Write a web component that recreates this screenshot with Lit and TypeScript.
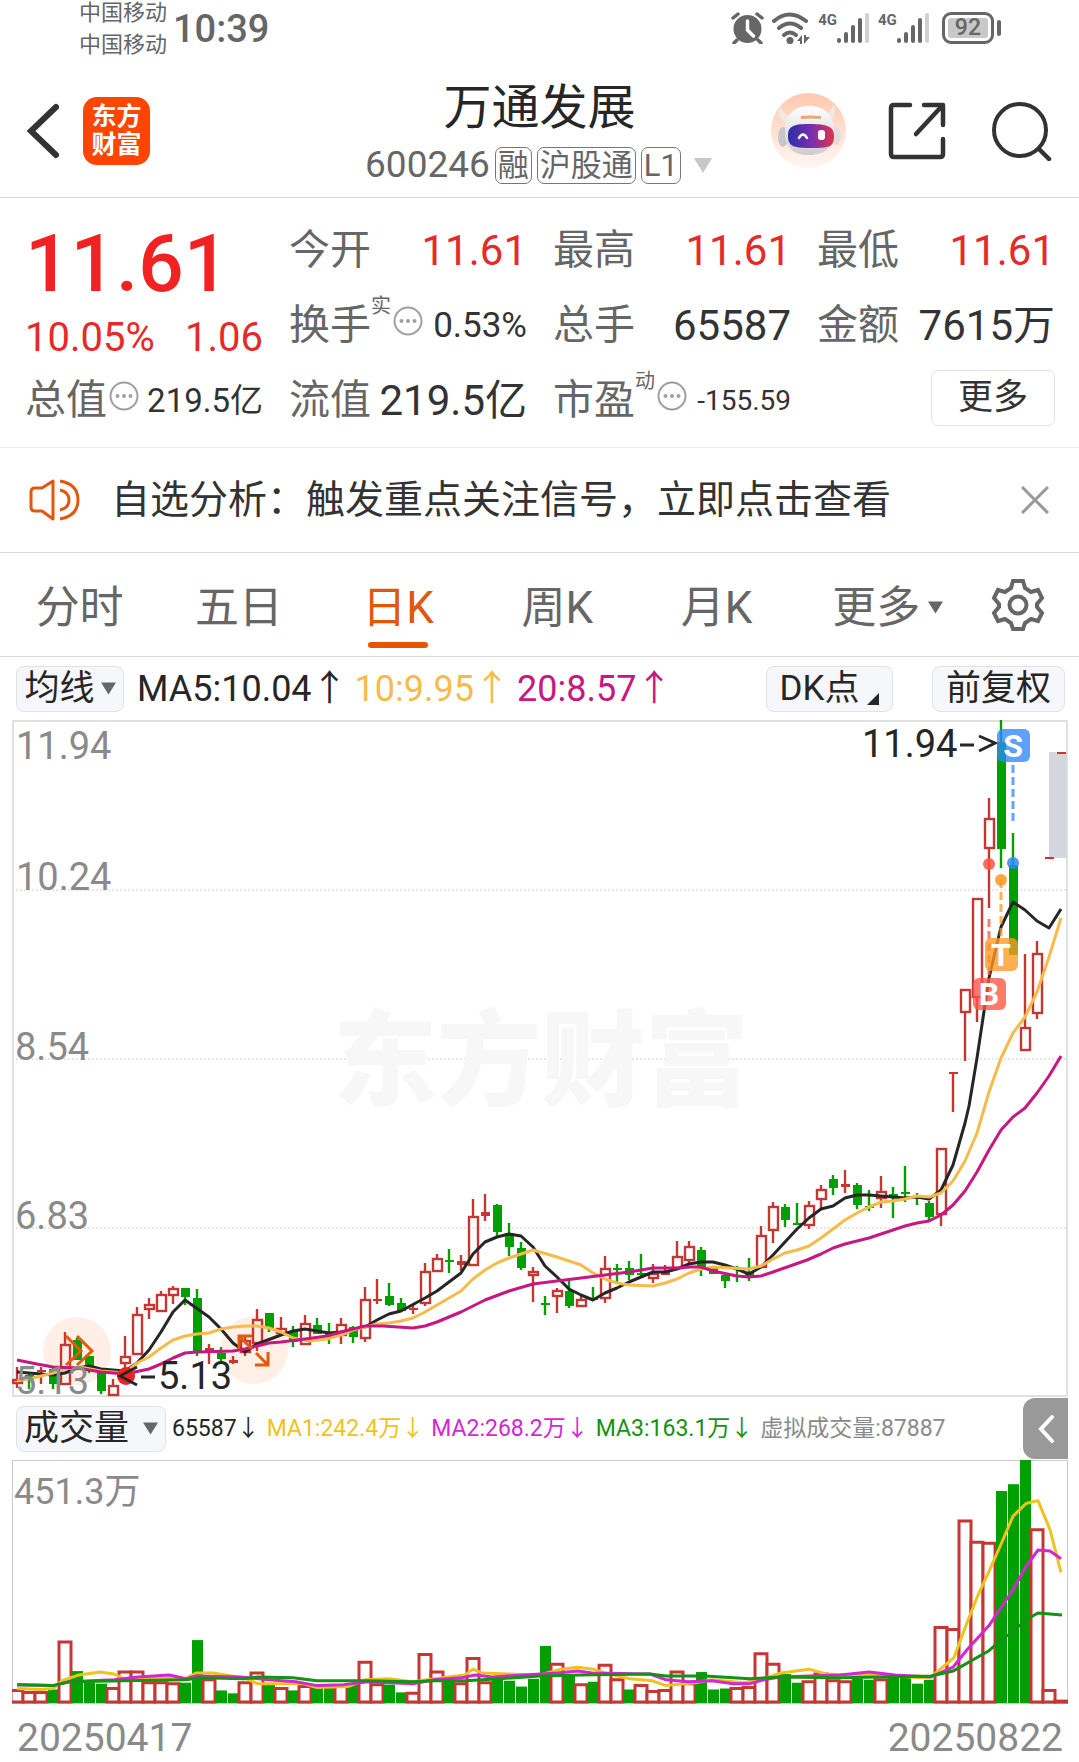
import { LitElement, html, svg, css } from "lit";
import { customElement, state } from "lit/decorators.js";

type Dir = "r" | "g";
/** direction, high, body top, body bottom, low, volume bar height */
type Candle = [Dir, number, number, number, number, number];

const CANDLES: Candle[] = [
  ["r", 1367, 1379, 1383, 1388, 14], ["g", 1372, 1375, 1378, 1389, 12], ["r", 1367, 1370, 1371, 1384, 12],
  ["g", 1367, 1369, 1384, 1389, 14], ["r", 1332, 1344, 1384, 1384, 64], ["g", 1338, 1340, 1360, 1360, 33],
  ["g", 1356, 1356, 1367, 1373, 21], ["g", 1373, 1373, 1391, 1394, 20], ["r", 1379, 1385, 1395, 1395, 16],
  ["r", 1336, 1356, 1363, 1370, 33], ["r", 1307, 1314, 1354, 1354, 33], ["r", 1298, 1304, 1309, 1319, 22],
  ["r", 1291, 1294, 1311, 1311, 22], ["r", 1286, 1288, 1295, 1304, 21], ["g", 1288, 1288, 1297, 1305, 21],
  ["g", 1289, 1298, 1353, 1356, 65], ["r", 1344, 1348, 1350, 1364, 25], ["g", 1347, 1353, 1359, 1361, 13],
  ["r", 1356, 1360, 1362, 1364, 10], ["r", 1337, 1340, 1352, 1356, 22], ["r", 1309, 1319, 1343, 1351, 32],
  ["g", 1313, 1313, 1328, 1332, 19], ["r", 1317, 1328, 1333, 1336, 16], ["g", 1326, 1331, 1342, 1347, 13],
  ["r", 1315, 1323, 1344, 1344, 18], ["g", 1318, 1325, 1334, 1334, 16], ["g", 1323, 1333, 1334, 1344, 16],
  ["r", 1318, 1324, 1335, 1344, 19], ["g", 1326, 1327, 1337, 1343, 19], ["r", 1287, 1299, 1338, 1342, 43],
  ["r", 1279, 1299, 1300, 1304, 20], ["g", 1283, 1296, 1305, 1306, 19], ["g", 1298, 1303, 1311, 1312, 11],
  ["r", 1305, 1308, 1309, 1314, 11], ["r", 1263, 1271, 1303, 1306, 51], ["r", 1254, 1258, 1271, 1271, 33],
  ["g", 1249, 1260, 1262, 1273, 22], ["r", 1255, 1261, 1264, 1271, 21], ["r", 1199, 1216, 1265, 1265, 47],
  ["r", 1194, 1212, 1215, 1221, 22], ["g", 1204, 1205, 1232, 1237, 25], ["g", 1223, 1233, 1247, 1256, 23],
  ["g", 1242, 1248, 1268, 1270, 17], ["r", 1267, 1271, 1275, 1302, 25], ["g", 1296, 1303, 1305, 1315, 59],
  ["r", 1288, 1290, 1296, 1313, 41], ["g", 1281, 1291, 1306, 1308, 29], ["r", 1295, 1299, 1306, 1306, 20],
  ["g", 1287, 1298, 1300, 1300, 22], ["r", 1256, 1268, 1298, 1303, 40], ["g", 1264, 1268, 1270, 1282, 25],
  ["g", 1261, 1268, 1275, 1280, 14], ["g", 1254, 1273, 1275, 1277, 19], ["r", 1264, 1273, 1278, 1283, 13],
  ["r", 1265, 1271, 1274, 1274, 14], ["r", 1241, 1256, 1268, 1268, 33], ["r", 1241, 1246, 1260, 1263, 21],
  ["g", 1247, 1250, 1267, 1276, 32], ["g", 1268, 1268, 1274, 1274, 14], ["g", 1273, 1275, 1281, 1288, 15],
  ["g", 1266, 1275, 1277, 1282, 16], ["g", 1258, 1273, 1276, 1281, 17], ["r", 1226, 1235, 1267, 1267, 52],
  ["r", 1202, 1206, 1230, 1243, 41], ["g", 1204, 1207, 1220, 1227, 30], ["g", 1203, 1223, 1225, 1225, 21],
  ["r", 1201, 1205, 1225, 1229, 23], ["r", 1185, 1189, 1199, 1208, 31], ["g", 1175, 1179, 1188, 1195, 24],
  ["r", 1170, 1184, 1186, 1193, 23], ["g", 1183, 1185, 1205, 1209, 25], ["g", 1190, 1206, 1207, 1211, 24],
  ["r", 1176, 1191, 1198, 1208, 25], ["g", 1187, 1194, 1196, 1218, 27], ["g", 1166, 1192, 1194, 1202, 29],
  ["g", 1193, 1196, 1198, 1205, 20], ["g", 1201, 1203, 1217, 1220, 24], ["r", 1148, 1148, 1214, 1226, 79],
  ["r", 1072, 1072, 1073, 1112, 77], ["r", 989, 989, 1012, 1061, 189], ["r", 898, 898, 997, 1022, 167],
  ["r", 798, 818, 848, 908, 166], ["g", 720, 742, 849, 868, 219], ["g", 833, 865, 955, 955, 226],
  ["r", 954, 1027, 1050, 1050, 251], ["r", 941, 953, 1013, 1019, 180], ["r", 857, 857, 858, 858, 14],
  ["r", 752, 752, 753, 753, 3],
];
/** Sessions whose volume bar takes the opposite colour to the candle. */
const VOLUME_FLIPPED = new Set([1, 18, 43, 50, 52, 60, 61, 68, 84]);

const PRICE_MA = [
  { cls: "ma-a", pts: "17,1372 53,1375 65,1373 77,1368 89,1366 101,1369 125,1371 137,1363 149,1350 161,1332 173,1312 185,1300 209,1317 221,1329 233,1343 245,1352 257,1344 281,1335 293,1331 305,1329 329,1333 341,1332 365,1327 377,1320 389,1314 401,1311 425,1298 437,1291 449,1282 461,1273 473,1254 485,1242 497,1237 509,1234 521,1236 533,1247 545,1266 557,1277 569,1289 581,1295 593,1300 605,1293 617,1288 629,1282 641,1277 653,1272 665,1272 677,1269 689,1264 701,1262 713,1262 725,1265 737,1269 749,1274 761,1267 773,1255 785,1242 797,1229 809,1218 821,1209 833,1206 845,1198 857,1195 869,1195 893,1197 905,1198 917,1197 929,1199 941,1190 953,1165 965,1123 969,1106 977,1058 989,978 1001,927 1013,902 1025,910 1037,921 1049,928 1061,909" },
  { cls: "ma-b", pts: "17,1381 33,1378 53,1373 65,1369 80,1367 101,1371 125,1373 137,1363 149,1357 161,1348 173,1340 185,1336 197,1334 209,1333 221,1329 233,1327 245,1326 257,1326 269,1328 281,1332 293,1338 310,1341 327,1339 341,1335 353,1330 365,1327 377,1324 389,1323 401,1321 413,1318 425,1312 437,1305 449,1298 461,1291 473,1279 485,1270 497,1263 509,1258 521,1254 533,1250 557,1257 569,1261 581,1265 593,1273 605,1279 617,1283 629,1285 653,1286 665,1283 677,1279 689,1273 701,1269 713,1267 749,1269 761,1266 773,1259 785,1253 797,1250 809,1246 821,1238 833,1229 845,1220 857,1213 869,1207 881,1202 893,1201 905,1199 917,1196 929,1197 941,1193 953,1181 965,1161 977,1133 989,1092 1001,1058 1013,1033 1025,1017 1037,992 1049,957 1061,918" },
  { cls: "ma-c", pts: "17,1360 37,1364 53,1367 77,1368 101,1372 125,1374 149,1369 161,1364 173,1358 185,1353 197,1352 233,1351 245,1349 257,1346 269,1343 281,1342 305,1339 327,1336 341,1332 365,1326 383,1326 413,1328 425,1326 437,1322 449,1317 461,1312 485,1300 509,1291 533,1284 557,1281 581,1278 605,1275 629,1272 653,1268 677,1268 690,1267 701,1267 713,1271 737,1276 749,1277 761,1276 773,1272 790,1266 807,1260 821,1254 833,1248 845,1244 869,1238 893,1230 905,1226 917,1223 929,1221 941,1215 953,1205 965,1191 977,1172 989,1150 1001,1130 1013,1117 1025,1108 1037,1093 1049,1076 1061,1056" },
];

const VOLUME_MA = [
  { cls: "vol-a", pts: "17,1699 41,1700 53,1699 62,1691 79,1685 100,1682 114,1684 124,1689 162,1688 183,1690 196,1683 213,1683 244,1688 258,1694 303,1694 317,1698 348,1697 365,1690 389,1689 413,1692 448,1687 465,1685 473,1679 482,1683 540,1685 561,1679 578,1677 593,1679 605,1683 630,1689 652,1691 666,1696 695,1693 712,1690 743,1693 760,1690 781,1683 809,1679 826,1684 850,1685 884,1685 919,1688 931,1687 954,1667 967,1631 977,1605 989,1578 1001,1550 1013,1521 1026,1508 1038,1505 1050,1535 1061,1579" },
  { cls: "vol-b", pts: "17,1695 53,1696 69,1692 114,1690 138,1687 169,1685 186,1689 196,1686 241,1687 269,1690 296,1692 317,1696 344,1695 368,1692 413,1694 434,1690 461,1688 475,1685 492,1687 540,1684 557,1683 578,1681 592,1683 650,1684 666,1690 688,1692 712,1691 733,1694 750,1694 764,1690 781,1687 809,1686 840,1685 869,1682 895,1685 931,1687 953,1677 967,1659 989,1634 1013,1597 1026,1573 1038,1556 1050,1557 1061,1565" },
  { cls: "vol-c", pts: "17,1695 53,1696 69,1692 124,1691 186,1690 200,1688 244,1689 258,1687 293,1688 317,1691 368,1691 413,1692 434,1691 465,1691 500,1689 540,1686 580,1685 650,1684 666,1686 705,1686 750,1689 781,1687 840,1688 880,1687 931,1686 953,1681 989,1660 1001,1649 1013,1640 1026,1628 1038,1621 1050,1622 1062,1623" },
];

const PITCH = 12;
const centre = (i: number) => 17 + PITCH * i;

@customElement("kline-chart")
export class KlineChart extends LitElement {
  static styles = css`
    :host { display: block; }
    svg { display: block; width: 100%; height: auto; font-family: Roboto, "Noto Sans CJK SC", sans-serif; }
    .frame { fill: none; stroke: #e0e0e0; stroke-width: 2; }
    .grid { stroke: #cfcfcf; stroke-width: 1; stroke-dasharray: 2 2; }
    .up { fill: none; stroke: #c43733; stroke-width: 2.4; }
    .flat { fill: #c43733; }
    .down { fill: #00a000; }
    .down-wick { stroke: #00a000; stroke-width: 2.4; }
    .line { fill: none; stroke-width: 3; stroke-linejoin: round; }
    .ma-a { stroke: #262626; }
    .ma-b { stroke: #f6bb4b; }
    .ma-c { stroke: #c71780; }
    .axis { font-size: 38px; fill: #8a8a8a; }
    .note { font-size: 38px; fill: #262626; }
    .arrow { fill: none; stroke: #262626; stroke-width: 3; }
    .mark { font-size: 104px; font-weight: 900; fill: #f7f7f7; text-anchor: middle; }
    .badge { font-size: 32px; font-weight: 700; fill: #fff; text-anchor: middle; }
    .halo { fill: #ffe4d6; opacity: .6; }
    .low { fill: #ee2222; }
    .tool { fill: none; stroke: #e35a0c; stroke-width: 3; }
    .range { fill: #d3d6dd; }
    .s { fill: #2f86fb; stroke: #2f86fb; }
    .t { fill: #ff9a22; stroke: #ff9a22; }
    .b { fill: #fe5442; stroke: #fe5442; }
    .dot { stroke: none; opacity: .85; }
    .box { stroke: none; opacity: .78; }
    .dash { stroke-width: 3; stroke-dasharray: 8 4; opacity: .75; }
  `;

  private candle([dir, high, top, bottom, low]: Candle, i: number) {
    const x = centre(i);
    if (dir === "g") {
      return svg`<line class="down-wick" x1=${x} x2=${x} y1=${high} y2=${low}></line>
        <rect class="down" x=${x - 4} y=${top} width="9" height=${Math.max(2, bottom - top)}></rect>`;
    }
    if (bottom - top < 4) {
      return svg`<line class="up" x1=${x} x2=${x} y1=${high} y2=${low}></line>
        <rect class="flat" x=${x - 4} y=${top} width="9" height=${bottom - top + 1}></rect>`;
    }
    return svg`<line class="up" x1=${x} x2=${x} y1=${high} y2=${top}></line>
      <line class="up" x1=${x} x2=${x} y1=${bottom} y2=${low}></line>
      <rect class="up" x=${x - 4} y=${top + 1} width="9" height=${bottom - top - 1}></rect>`;
  }

  render() {
    return html`<svg viewBox="12 720 1056 677" role="img" aria-label="日K线图">
      ${[890, 1059, 1228].map((y) => svg`<line class="grid" x1="12" x2="1068" y1=${y} y2=${y}></line>`)}
      <text class="mark" x="541" y="1098">东方财富</text>
      <rect class="frame" x="13" y="721" width="1054" height="675"></rect>
      <circle class="halo" cx="77" cy="1351" r="34"></circle>
      <circle class="halo" cx="254" cy="1350" r="34"></circle>
      <rect class="range" x="1049" y="752" width="18" height="106"></rect>
      ${CANDLES.map((c, i) => this.candle(c, i))}
      ${PRICE_MA.map((m) => svg`<polyline class="line ${m.cls}" points=${m.pts}></polyline>`)}
      <circle class="low" cx="126" cy="1376" r="9"></circle>
      <path class="tool" d="M66 1336l15 15-15 14M77 1336l15 15-15 14"></path>
      <path class="tool" d="M239 1349v-13h13M240 1337l12 12M256 1353l12 12M255 1365h13v-13"></path>
      <text class="axis" x="16" y="759">11.94</text>
      <text class="axis" x="16" y="890">10.24</text>
      <text class="axis" x="15" y="1060">8.54</text>
      <text class="axis" x="15" y="1229">6.83</text>
      <text class="axis" x="15" y="1394">5.13</text>
      <path class="arrow" d="M155 1377h-14M137 1367l-17 9 17 9"></path>
      <text class="note" x="158" y="1389">5.13</text>
      <text class="note" x="862" y="757">11.94</text>
      <path class="arrow" d="M960 745h14M979 736l16 7-16 8"></path>
      <line class="dash s" x1="1013" x2="1013" y1="765" y2="821"></line>
      <circle class="dot s" cx="1013" cy="863" r="6"></circle>
      <line class="dash t" x1="1001" x2="1001" y1="880" y2="938"></line>
      <circle class="dot t" cx="1001" cy="880" r="6"></circle>
      <line class="dash b" x1="989" x2="989" y1="919" y2="978"></line>
      <circle class="dot b" cx="989" cy="864" r="6"></circle>
      <rect class="box s" x="997" y="729" width="33" height="33" rx="6"></rect>
      <text class="badge" x="1013" y="757">S</text>
      <rect class="box t" x="985" y="938" width="33" height="33" rx="6"></rect>
      <text class="badge" x="1001" y="966">T</text>
      <rect class="box b" x="973" y="978" width="33" height="32" rx="6"></rect>
      <text class="badge" x="989" y="1005">B</text>
    </svg>`;
  }
}

@customElement("volume-chart")
export class VolumeChart extends LitElement {
  static styles = css`
    :host { display: block; position: relative; font-family: Roboto, "Noto Sans CJK SC", sans-serif; }
    svg { display: block; width: 100%; aspect-ratio: 1056 / 244; }
    .frame { fill: none; stroke: #cccccc; stroke-width: 2; vector-effect: non-scaling-stroke; }
    .up { fill: #fff; stroke: #c43733; stroke-width: 3; vector-effect: non-scaling-stroke; }
    .down { fill: #00a000; }
    .line { fill: none; stroke-width: 3; stroke-linejoin: round; vector-effect: non-scaling-stroke; }
    .vol-a { stroke: #efc21d; }
    .vol-b { stroke: #d227d2; }
    .vol-c { stroke: #139213; }
    .max { position: absolute; left: 2px; top: 9px; font-size: 36px; line-height: 46px; color: #8a8a8a; }
  `;

  render() {
    const base = 1714;
    return html`<svg viewBox="12 1463 1056 252" preserveAspectRatio="none" role="img" aria-label="成交量图">
        <rect class="frame" x="12" y="1463" width="1056" height="252"></rect>
        ${CANDLES.map(([dir, , , , , h], i) => {
          const x = centre(i);
          return (dir === "g") !== VOLUME_FLIPPED.has(i)
            ? svg`<rect class="down" x=${x - 5} y=${base - h} width="11" height=${h}></rect>`
            : svg`<rect class="up" x=${x - 6} y=${base - h + 1} width="12" height=${Math.max(1, h - 2)}></rect>`;
        })}
        ${VOLUME_MA.map((m) => svg`<polyline class="line ${m.cls}" points=${m.pts}></polyline>`)}
      </svg>
      <span class="max">451.3万</span>`;
  }
}

const info = html`<svg class="info" viewBox="0 0 30 30" aria-hidden="true">
  <circle cx="15" cy="15" r="13.5" fill="none" stroke="#a0a0a0" stroke-width="2"></circle>
  <g fill="#a0a0a0"><circle cx="8.5" cy="15" r="2"></circle><circle cx="15" cy="15" r="2"></circle><circle cx="21.5" cy="15" r="2"></circle></g>
</svg>`;

const caret = (cls = "") => html`<svg class="caret ${cls}" viewBox="0 0 16 13" aria-hidden="true"><path d="M0 0h16L8 13z" fill="currentColor"></path></svg>`;

const signal = html`<span class="net"><span class="gen">4G</span><svg class="bars" viewBox="0 0 34 32" aria-hidden="true">
  <g stroke="#666" stroke-width="4" stroke-linecap="round"><path d="M3 28v1M10 22v7M17 15v14M24 8v21"></path><path d="M31 3v26" stroke="#d0d0d0"></path></g>
</svg></span>`;

@customElement("app-root")
export class AppRoot extends LitElement {
  static styles = css`
    :host { display: block; background: #fff; color: #333; font-family: Roboto, "Noto Sans CJK SC", sans-serif; font-size: 36px; }
    * { box-sizing: border-box; }
    button { font: inherit; color: inherit; background: none; border: 0; padding: 0; margin: 0; cursor: pointer; }
    svg { display: block; flex: none; }
    h1, p { margin: 0; font-weight: 400; }

    .status { display: flex; align-items: center; padding: 0 78px 0 79px; min-height: 56px; color: #666; }
    .carriers { font-size: 22px; line-height: 32px; margin: -3px 0 -5px; }
    .carriers span { display: block; }
    .time { font-size: 38px; line-height: 54px; font-weight: 500; margin-left: 6px; padding-top: 2px; flex: 1; }
    .sys { display: flex; align-items: center; gap: 8px; }
    .alarm { width: 33px; height: 32px; }
    .wifi { width: 38px; height: 34px; }
    .net { display: flex; }
    .gen { font-size: 15px; line-height: 16px; font-weight: 700; }
    .bars { width: 34px; height: 32px; margin-left: -1px; }
    .battery { display: flex; align-items: center; gap: 3px; margin-left: 4px; }
    .cell { border: 3px solid #666; border-radius: 9px; padding: 3px; }
    .level { display: block; background: #c8c8c8; border-radius: 3px; font-size: 23px; line-height: 20px; font-weight: 500; padding: 0 7px; }
    .nub { width: 4px; height: 16px; border-radius: 2px; background: #666; }

    .head { display: grid; grid-template-columns: 1fr auto 1fr; align-items: center; min-height: 142px; padding: 0 26px; border-bottom: 1px solid #d8d8d8; }
    .left, .right { display: flex; align-items: center; padding-top: 8px; }
    .left { gap: 24px; }
    .right { justify-content: flex-end; gap: 42px; }
    .back { width: 33px; height: 56px; }
    .logo { display: grid; place-content: center; width: 67px; height: 68px; border-radius: 14px; background: #fe4502; color: #fff; font-size: 25px; line-height: 28px; font-weight: 700; text-decoration: none; text-align: center; }
    .logo span { display: block; }
    .title { text-align: center; align-self: start; padding-top: 20px; }
    h1 { font-size: 48px; line-height: 64px; color: #262626; }
    .sub { display: flex; align-items: center; gap: 5px; color: #666; font-size: 37px; line-height: 44px; margin-top: 3px; }
    .tag { border: 1px solid #777; border-radius: 7px; font-size: 31px; line-height: 35px; padding: 0 2px; }
    .caret { width: 15px; height: 13px; color: #666; }
    .caret.big { width: 22px; height: 15px; color: #c8c8c8; margin-left: 6px; }
    .robot { width: 75px; height: 75px; }
    .share { width: 60px; height: 60px; }
    .search { width: 61px; height: 60px; margin-left: 2px; }

    .quote { display: grid; grid-template-columns: repeat(4, minmax(0, 1fr)); column-gap: 26px; grid-template-rows: repeat(3, 75px); padding: 15px 24px 9px 25px; border-bottom: 1px solid #ececec; }
    .price { grid-row: span 2; color: #e62a2a; }
    .last { font-size: 80px; line-height: 78px; font-weight: 500; color: #f22222; padding: 12px 0 0 0; }
    .chg { display: flex; justify-content: space-between; font-size: 40px; line-height: 70px; }
    .cell-q { display: flex; align-items: center; white-space: nowrap; line-height: 75px; }
    .label { font-size: 41px; color: #666; }
    .sup { font-size: 20px; line-height: 20px; color: #666; align-self: flex-start; padding-top: 8px; }
    .info { width: 30px; height: 30px; margin-top: -10px; margin-left: 2px; }
    .val { margin-left: auto; font-size: 42px; }
    .val.red { color: #e62a2a; }
    .val.mid { font-size: 35px; }
    .val.small { font-size: 33px; }
    .val.tiny { font-size: 28px; }
    .more { justify-self: end; align-self: center; width: 124px; line-height: 54px; font-size: 35px; border: 1px solid #e2e2e2; border-radius: 7px; margin-bottom: 6px; }

    .notice { display: flex; align-items: center; min-height: 105px; padding: 0 30px 0 29px; border-bottom: 1px solid #d8d8d8; }
    .horn { width: 52px; height: 44px; }
    .notice p { flex: 1; margin-left: 30px; font-size: 39px; line-height: 56px; white-space: nowrap; }
    .close { width: 28px; height: 28px; }

    .tabs { display: grid; grid-template-columns: repeat(5, 16fr) 18fr 10fr; min-height: 104px; padding-right: 4px; border-bottom: 1px solid #d8d8d8; color: #666; }
    .tab { display: flex; align-items: center; justify-content: center; gap: 8px; font-size: 44px; line-height: 60px; padding-top: 6px; position: relative; white-space: nowrap; }
    .tab.menu { padding-left: 4px; }
    .tab.on { color: #e2570d; }
    .tab.on::after { content: ""; position: absolute; bottom: 8px; width: 60px; height: 6px; border-radius: 3px; background: #e65408; }
    .gear { width: 54px; height: 54px; }
    .tab.set { padding: 0 14px 0 0; }

    .bar { display: flex; align-items: center; min-height: 63px; padding: 0 14px 0 16px; white-space: nowrap; color: #262626; }
    .pill { display: flex; flex: none; align-items: center; justify-content: center; gap: 6px; height: 46px; border: 1px solid #dfe2e6; border-radius: 8px; background: #f6f7fa; font-size: 35px; line-height: 46px; }
    .avg { width: 108px; }
    .legend { display: flex; flex: 1; margin-left: 13px; gap: 7px; font-size: 36px; line-height: 48px; }
    .y { color: #f6bb4b; }
    .m { color: #c71780; }
    .dk { width: 127px; gap: 8px; }
    .corner { width: 12px; height: 12px; margin-top: 20px; }
    .adj { width: 133px; margin-left: 39px; }
    .vbar { padding-right: 11px; }
    .kind { width: 150px; gap: 14px; }
    .vlegend { display: flex; flex: 1; margin-left: 6px; gap: 7px; font-size: 23px; line-height: 48px; }
    .vy { color: #efc21d; }
    .vm { color: #d227d2; }
    .vg { color: #139213; }
    .vx { color: #8a8a8a; }
    .fold { display: grid; flex: none; place-items: center; width: 45px; height: 61px; border-radius: 12px 0 0 12px; background: #999; }
    .fold svg { width: 18px; height: 32px; }
    .plot { display: block; margin: 0 11px 0 12px; }
    .dates { display: flex; justify-content: space-between; padding: 11px 16px 1px 17px; font-size: 39px; line-height: 46px; color: #8a8a8a; }
  `;

  @state() private tab = "日K";

  private renderStatus() {
    return html`<div class="status">
      <div class="carriers"><span>中国移动</span><span>中国移动</span></div>
      <div class="time">10:39</div>
      <div class="sys">
        <svg class="alarm" viewBox="0 0 33 32" aria-hidden="true">
          <circle cx="16.5" cy="17" r="14" fill="#666"></circle>
          <path d="M2 6l5-4M26 2l5 4M6 28l-3 3M27 28l3 3" stroke="#666" stroke-width="3.5" stroke-linecap="round"></path>
          <path d="M16.5 9v9l6 6" fill="none" stroke="#fff" stroke-width="3.5" stroke-linecap="round"></path>
        </svg>
        <svg class="wifi" viewBox="0 0 38 34" aria-hidden="true">
          <g fill="none" stroke="#666" stroke-width="4" stroke-linecap="round"><path d="M2 10q15.5-13 32 0M7 17q11-9 22 0M12 24q6-5 12 0"></path></g>
          <circle cx="18" cy="29.5" r="3.5" fill="#666"></circle>
          <path d="M25 30l5-6v9h-2v-3zM32 24v9l6-7h-4v-2z" fill="#666"></path>
        </svg>
        ${signal}${signal}
        <div class="battery"><span class="cell"><span class="level">92</span></span><span class="nub"></span></div>
      </div>
    </div>`;
  }

  private renderHeader() {
    return html`<header class="head">
      <div class="left">
        <button aria-label="返回"><svg class="back" viewBox="0 0 33 56"><path d="M30 4L5 28l25 24" fill="none" stroke="#333" stroke-width="6" stroke-linecap="round"></path></svg></button>
        <a class="logo" href="#"><span>东方</span><span>财富</span></a>
      </div>
      <div class="title">
        <h1>万通发展</h1>
        <div class="sub"><span>600246</span><span class="tag">融</span><span class="tag">沪股通</span><span class="tag">L1</span>${caret("big")}</div>
      </div>
      <div class="right">
        <button aria-label="智能助手"><svg class="robot" viewBox="0 0 75 75">
          <defs>
            <linearGradient id="sky" x1="0" y1="0" x2="0" y2="1"><stop offset="0" stop-color="#ffc9ae"></stop><stop offset="1" stop-color="#fff7f3"></stop></linearGradient>
            <linearGradient id="visor"><stop offset="0" stop-color="#2b2fa8"></stop><stop offset=".5" stop-color="#7a2fae"></stop><stop offset="1" stop-color="#e0334d"></stop></linearGradient>
            <linearGradient id="shell" x1="0" y1="0" x2="0" y2="1"><stop offset="0" stop-color="#fff"></stop><stop offset="1" stop-color="#cfcbcf"></stop></linearGradient>
          </defs>
          <circle cx="37.5" cy="37.5" r="37.5" fill="url(#sky)"></circle>
          <path d="M9 14c-3 7 0 14 7 16l6-7c-6 0-10-3-13-9zM62 12c4 7 1 15-5 17l-5-8c5 0 8-3 10-9z" fill="#f0e9e8"></path>
          <ellipse cx="12" cy="44" rx="5" ry="10" fill="#c9c5c9"></ellipse><ellipse cx="65" cy="43" rx="5" ry="9" fill="#e3dcdc"></ellipse>
          <path d="M14 40c0-18 8-27 24-27s25 9 25 26c0 14-8 23-26 23-15 0-23-8-23-22z" fill="url(#shell)"></path>
          <path d="M30 23q10-1 20 0v3q-10-1-20 0z" fill="#e8a873"></path>
          <path d="M17 43c0-9 4-12 20-12s26 1 26 12-5 12-22 12c-17 0-24-1-24-12z" fill="url(#visor)"></path>
          <path d="M28 45q4-7 8 0" fill="none" stroke="#fff" stroke-width="2.5" stroke-linecap="round"></path>
          <rect x="47" y="37" width="7" height="10" rx="3" fill="#fff"></rect>
        </svg></button>
        <button aria-label="分享"><svg class="share" viewBox="0 0 60 60"><path d="M22 4H6q-3 0-3 3v46q0 3 3 3h46q3 0 3-3V38M36 4h19v20M54 5L28 33" fill="none" stroke="#333" stroke-width="4.5" stroke-linecap="round" stroke-linejoin="round"></path></svg></button>
        <button aria-label="搜索"><svg class="search" viewBox="0 0 61 60"><circle cx="28" cy="29" r="26" fill="none" stroke="#333" stroke-width="4"></circle><path d="M47 48l10 10" stroke="#333" stroke-width="4.5" stroke-linecap="round"></path></svg></button>
      </div>
    </header>`;
  }

  private cell(label: string, value: string, cls = "", sup = "", hint = false) {
    return html`<div class="cell-q"><span class="label">${label}</span>${sup ? html`<span class="sup">${sup}</span>` : ""}${hint ? info : ""}<span class="val ${cls}">${value}</span></div>`;
  }

  private renderQuote() {
    return html`<section class="quote">
      <div class="price">
        <div class="last">11.61</div>
        <div class="chg"><span>10.05%</span><span>1.06</span></div>
      </div>
      ${this.cell("今开", "11.61", "red")}
      ${this.cell("最高", "11.61", "red")}
      ${this.cell("最低", "11.61", "red")}
      ${this.cell("换手", "0.53%", "mid", "实", true)}
      ${this.cell("总手", "65587")}
      ${this.cell("金额", "7615万")}
      ${this.cell("总值", "219.5亿", "small", "", true)}
      ${this.cell("流值", "219.5亿")}
      ${this.cell("市盈", "-155.59", "tiny", "动", true)}
      <button class="more">更多</button>
    </section>`;
  }

  private renderNotice() {
    return html`<section class="notice">
      <svg class="horn" viewBox="0 0 52 44" aria-hidden="true"><g fill="none" stroke="#e2570d" stroke-width="3"><path d="M24 3v38L13 33H6q-4 0-4-4V14q0-4 4-4h7z" stroke-linejoin="round"></path><path d="M31 12q9 2 9 10t-9 10M31 3q18 3 18 19T31 41"></path></g></svg>
      <p>自选分析：触发重点关注信号，立即点击查看</p>
      <button aria-label="关闭"><svg class="close" viewBox="0 0 28 28"><path d="M1 1l26 26M27 1L1 27" stroke="#999" stroke-width="3"></path></svg></button>
    </section>`;
  }

  private renderTabs() {
    return html`<nav class="tabs">
      ${["分时", "五日", "日K", "周K", "月K"].map(
        (t) => html`<button class="tab ${t === this.tab ? "on" : ""}" @click=${() => (this.tab = t)}>${t}</button>`,
      )}
      <button class="tab menu">更多${caret()}</button>
      <button class="tab set" aria-label="设置"><svg class="gear" viewBox="0 0 54 54"><g fill="none" stroke="#666" stroke-width="4"><path d="M22 3h10l2 7 6 4 7-2 4 8-5 6v3l5 6-4 8-7-2-6 4-2 6H22l-2-6-6-4-7 2-4-8 5-6v-3l-5-6 4-8 7 2 6-4z"></path><circle cx="27" cy="27" r="8.5"></circle></g></svg></button>
    </nav>`;
  }

  render() {
    return html`
      ${this.renderStatus()} ${this.renderHeader()} ${this.renderQuote()} ${this.renderNotice()} ${this.renderTabs()}
      <div class="bar">
        <button class="pill avg">均线${caret()}</button>
        <div class="legend"><span>MA5:10.04↑</span><span class="y">10:9.95↑</span><span class="m">20:8.57↑</span></div>
        <button class="pill dk">DK点<svg class="corner" viewBox="0 0 12 12" aria-hidden="true"><path d="M12 0v12H0z" fill="#262626"></path></svg></button>
        <button class="pill adj">前复权</button>
      </div>
      <kline-chart class="plot"></kline-chart>
      <div class="bar vbar">
        <button class="pill kind">成交量${caret()}</button>
        <div class="vlegend"><span>65587↓</span><span class="vy">MA1:242.4万↓</span><span class="vm">MA2:268.2万↓</span><span class="vg">MA3:163.1万↓</span><span class="vx">虚拟成交量:87887</span></div>
        <button class="fold" aria-label="展开"><svg viewBox="0 0 18 32"><path d="M15 4L4 16l11 12" fill="none" stroke="#fff" stroke-width="4" stroke-linecap="round"></path></svg></button>
      </div>
      <volume-chart class="plot"></volume-chart>
      <div class="dates"><span>20250417</span><span>20250822</span></div>
    `;
  }
}
